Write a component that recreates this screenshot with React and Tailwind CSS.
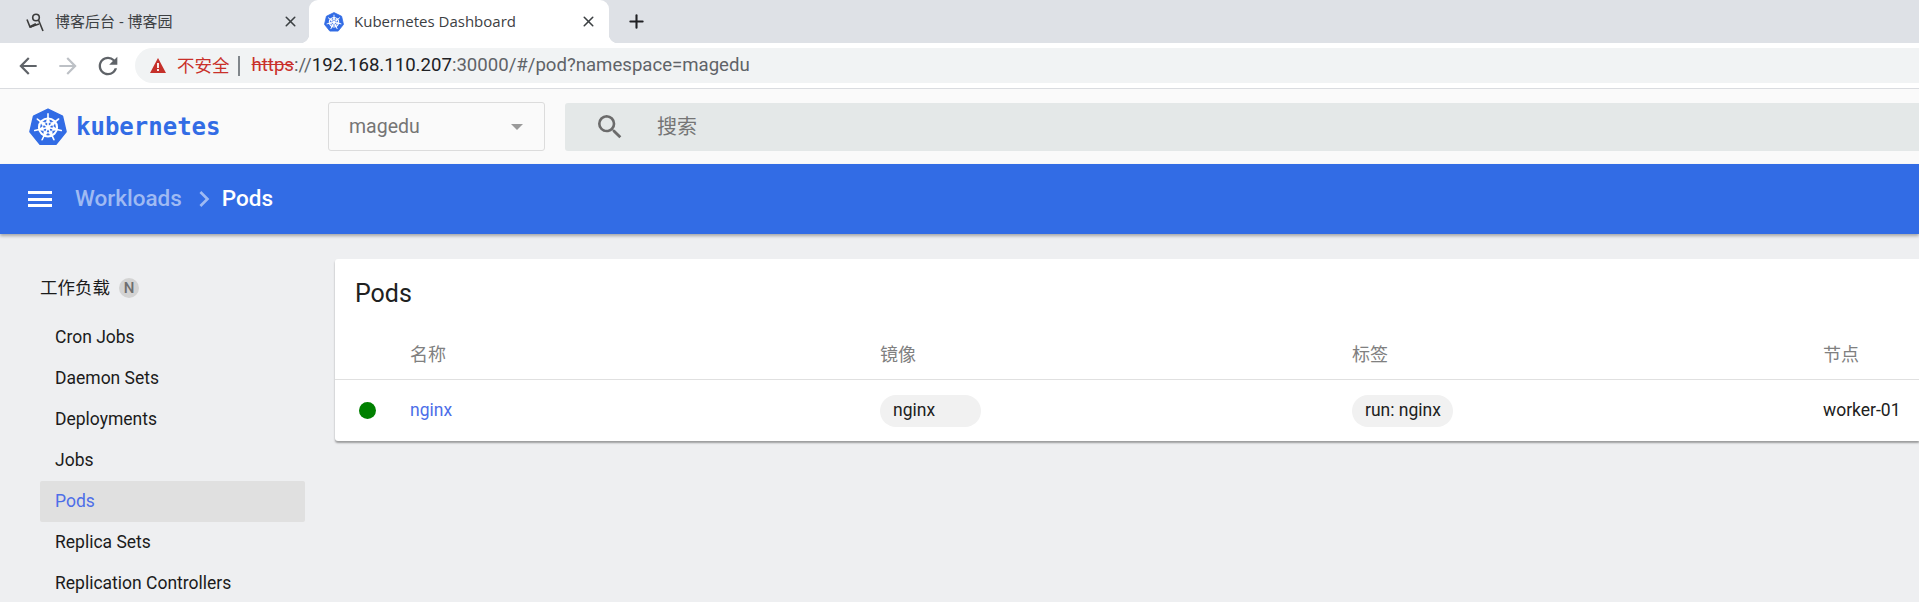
import { X, Plus } from "lucide-react";
import { MdArrowBack, MdArrowForward, MdRefresh, MdSearch, MdChevronRight } from "react-icons/md";

const sans = "font-['Roboto','Noto_Sans_CJK_SC',sans-serif]";

const navItems = [
  "Cron Jobs",
  "Daemon Sets",
  "Deployments",
  "Jobs",
  "Pods",
  "Replica Sets",
  "Replication Controllers",
];

const KubeLogo = ({ className }) => (
  <svg viewBox="0 0 40 40" className={className}>
    <path
      d="M20 1.2 35.2 8.5 39 24.9 28.4 38.2H11.6L1 24.9 4.8 8.5Z"
      fill="#326ce5"
      stroke="#326ce5"
      strokeWidth="1.6"
      strokeLinejoin="round"
    />
    <g stroke="#fff" fill="none">
      <circle cx="20" cy="20.5" r="9.5" strokeWidth="2.2" />
      <circle cx="20" cy="20.5" r="2" fill="#fff" strokeWidth="0.8" />
      {[0, 51.4, 102.8, 154.2, 205.6, 257, 308.4].map((angle) => (
        <g key={angle} transform={`rotate(${angle} 20 20.5)`}>
          <path d="M20 20.5V6.2" strokeWidth="1.7" strokeLinecap="round" />
          <path d="M17.6 15.5 20 9.5l2.4 6Z" fill="#fff" strokeWidth="0.4" />
        </g>
      ))}
    </g>
  </svg>
);

const BlogIcon = () => (
  <svg viewBox="0 0 20 20" className="h-[20px] w-[20px]" fill="none" stroke="#3c3c3c" strokeWidth="1.6">
    <circle cx="10" cy="5.5" r="3.3" />
    <path d="M1 7.5 4 15l9-3" />
    <path d="M4 15l6-3" strokeWidth="2.4" />
    <path d="M12.5 8 17 19" />
  </svg>
);

const Tab = ({ active, icon, title, className }) => (
  <div
    className={`relative flex h-full items-center ${className} ${
      active ? "rounded-t-[9px] bg-white" : ""
    }`}
  >
    {icon}
    <span className="truncate font-['Open_Sans','Noto_Sans_CJK_SC',sans-serif] text-[15px] text-[#3c4043]">
      {title}
    </span>
    <X className="ml-auto h-[17px] w-[17px] text-[#3c4043]" strokeWidth={2.2} />
    {active && (
      <>
        <span className="absolute bottom-0 left-[-9px] h-[9px] w-[9px] bg-[radial-gradient(circle_at_0_0,#dee1e6_9px,#fff_9.5px)]" />
        <span className="absolute bottom-0 right-[-9px] h-[9px] w-[9px] bg-[radial-gradient(circle_at_100%_0,#dee1e6_9px,#fff_9.5px)]" />
      </>
    )}
  </div>
);

const BrowserChrome = () => (
  <div className="shrink-0">
    <div className="flex h-[43px] items-end bg-[#dee1e6]">
      <Tab
        title="博客后台 - 博客园"
        className="w-[309px] pl-[26px] pr-[10px]"
        icon={<span className="mr-[9px] flex"><BlogIcon /></span>}
      />
      <Tab
        active
        title="Kubernetes Dashboard"
        className="w-[300px] pl-[15px] pr-[12px]"
        icon={<KubeLogo className="mr-[10px] h-[20px] w-[20px]" />}
      />
      <div className="flex h-full items-center pl-[17px]">
        <Plus className="h-[21px] w-[21px] text-[#202124]" strokeWidth={2.4} />
      </div>
    </div>
    <div className="flex h-[45px] items-center bg-white">
      <div className="flex w-[135px] items-center pl-[8px]">
        <span className="flex w-[40px] justify-center"><MdArrowBack className="text-[26px] text-[#5f6368]" /></span>
        <span className="flex w-[40px] justify-center"><MdArrowForward className="text-[26px] text-[#bdc1c6]" /></span>
        <span className="flex w-[40px] justify-center"><MdRefresh className="text-[28px] text-[#5f6368]" /></span>
      </div>
      <div className="flex h-[35px] flex-1 items-center rounded-l-full bg-[#f1f3f4] pl-[15px]">
        <svg viewBox="0 0 16 15" className="h-[15px] w-[16px]">
          <path d="M8 0 16 15H0Z" fill="#c5302a" />
          <path d="M7.1 5h1.8v5H7.1ZM7.1 11h1.8v1.9H7.1Z" fill="#fff" />
        </svg>
        <span className="ml-[11px] font-['Noto_Sans_CJK_SC',sans-serif] text-[17.5px] text-[#c9302a]">不安全</span>
        <span className="ml-[8px] h-[20px] w-[2px] bg-[#80868b]" />
        <span className="ml-[12px] font-['Roboto',sans-serif] text-[18.6px] text-[#5f6368]">
          <span className="text-[#c9302a] line-through">https</span>
          ://
          <span className="text-[#202124]">192.168.110.207</span>
          :30000/#/pod?namespace=magedu
        </span>
      </div>
    </div>
    <div className="h-px bg-[#dadce0]" />
  </div>
);

const Toolbar = () => (
  <div className="flex h-[75px] shrink-0 items-center bg-[#fafafa] pl-[29px]">
    <KubeLogo className="h-[38px] w-[38px]" />
    <span className="ml-[9px] w-[252px] font-['DejaVu_Sans_Mono',monospace] text-[24px] font-bold text-[#326ce5]">
      kubernetes
    </span>
    <div className="flex h-[49px] w-[217px] items-center justify-between rounded-[3px] border border-[#dcdcdc] pl-[20px] pr-[21px]">
      <span className={`${sans} text-[19.5px] text-[#757575]`}>magedu</span>
      <span className="h-0 w-0 border-x-[6px] border-t-[6px] border-x-transparent border-t-[#9a9a9a]" />
    </div>
    <div className="ml-[20px] flex h-[48px] flex-1 items-center rounded-l-[3px] bg-[#e4e8e8] pl-[29px]">
      <MdSearch className="text-[32px] text-[#6b6b6b]" />
      <span className={`${sans} ml-[31px] text-[20px] text-[#757575]`}>搜索</span>
    </div>
  </div>
);

const Breadcrumb = () => (
  <div className={`${sans} relative flex h-[70px] shrink-0 items-center bg-[#326ce5] pl-[28px] shadow-[0_2px_3px_rgba(0,0,0,0.3)]`}>
    <span className="flex h-[16px] w-[24px] flex-col justify-between">
      <span className="h-[3px] bg-white" />
      <span className="h-[3px] bg-white" />
      <span className="h-[3px] bg-white" />
    </span>
    <span className="ml-[23px] text-[22.5px] font-medium text-[#9fbaf3]">Workloads</span>
    <MdChevronRight className="ml-[6px] text-[32px] text-[#9fbaf3]" />
    <span className="ml-[2px] text-[22.5px] font-medium text-white">Pods</span>
  </div>
);

const Sidebar = () => (
  <aside className="w-[335px] shrink-0 pl-[40px] pt-[42px] text-[#1b1b1b]">
    <div className="flex h-[24px] items-center">
      <span className="text-[17.5px]">工作负载</span>
      <span className="ml-[9px] flex h-[20px] w-[20px] items-center justify-center rounded-full bg-[#d3d3d3] text-[15px] font-medium text-[#6e6e6e]">
        N
      </span>
    </div>
    <nav className="mt-[17px] w-[265px]">
      {navItems.map((item) => (
        <div
          key={item}
          className={`flex h-[41px] items-center rounded-[2px] pl-[15px] text-[17.5px] ${
            item === "Pods" ? "bg-[#e0e0e0] text-[#4d6ee8]" : ""
          }`}
        >
          {item}
        </div>
      ))}
    </nav>
  </aside>
);

const Chip = ({ children, className }) => (
  <span className={`flex h-[32px] items-center rounded-full bg-[#f1f1f1] pl-[13px] text-[17.5px] text-[#212121] ${className}`}>
    {children}
  </span>
);

const PodsCard = () => (
  <section className="mt-[25px] h-[182px] flex-1 rounded-l-[3px] bg-white shadow-[0_2px_2px_rgba(0,0,0,0.35)]">
    <h1 className="flex h-[70px] items-center pl-[20px] text-[25px] font-normal text-[#212121]">Pods</h1>
    <div className="grid h-[51px] grid-cols-[75px_470px_472px_471px_1fr] items-center border-b border-[#e0e0e0] text-[18px] text-[#808080]">
      <span />
      <span>名称</span>
      <span>镜像</span>
      <span>标签</span>
      <span>节点</span>
    </div>
    <div className="grid h-[61px] grid-cols-[75px_470px_472px_471px_1fr] items-center text-[17.5px] text-[#212121]">
      <span className="ml-[24px] h-[17px] w-[17px] rounded-full bg-[#008000]" />
      <span className="text-[#4d6ee8]">nginx</span>
      <span><Chip className="w-[101px]">nginx</Chip></span>
      <span><Chip className="w-[101px]">run: nginx</Chip></span>
      <span>worker-01</span>
    </div>
  </section>
);

export default function App() {
  return (
    <div className={`${sans} flex h-[602px] w-[1919px] flex-col overflow-hidden bg-[#eeeff1]`}>
      <BrowserChrome />
      <Toolbar />
      <Breadcrumb />
      <div className="flex min-h-0 flex-1">
        <Sidebar />
        <PodsCard />
      </div>
    </div>
  );
}
